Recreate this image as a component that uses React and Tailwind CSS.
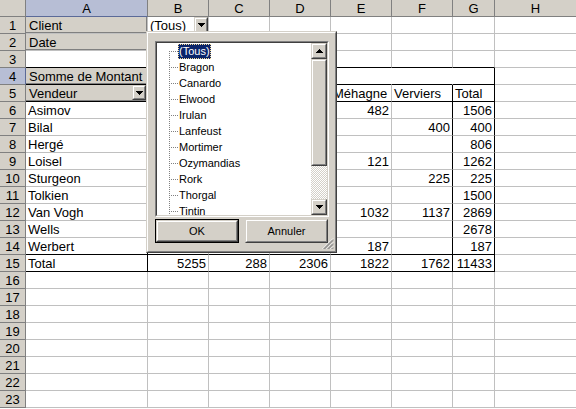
import React from 'react';

const W = ['w-[26px]', 'w-[122px]', 'w-[61px]', 'w-[61px]', 'w-[61px]', 'w-[61px]', 'w-[61px]', 'w-[42px]', 'w-[81px]'];
const LETTERS = ['A', 'B', 'C', 'D', 'E', 'F', 'G', 'H'];

const data = {
  1: { 0: { field: true, text: 'Client' }, 1: { text: '(Tous)', dd: true } },
  2: { 0: { field: true, text: 'Date' } },
  4: { 0: { field: true, text: 'Somme de Montant' } },
  5: { 0: { field: true, text: 'Vendeur', dd: true }, 4: { text: 'Méhagne' }, 5: { text: 'Verviers' }, 6: { text: 'Total' } },
  6: { 0: { text: 'Asimov' }, 4: { num: '482' }, 6: { num: '1506' } },
  7: { 0: { text: 'Bilal' }, 5: { num: '400' }, 6: { num: '400' } },
  8: { 0: { text: 'Hergé' }, 6: { num: '806' } },
  9: { 0: { text: 'Loisel' }, 4: { num: '121' }, 6: { num: '1262' } },
  10: { 0: { text: 'Sturgeon' }, 5: { num: '225' }, 6: { num: '225' } },
  11: { 0: { text: 'Tolkien' }, 6: { num: '1500' } },
  12: { 0: { text: 'Van Vogh' }, 4: { num: '1032' }, 5: { num: '1137' }, 6: { num: '2869' } },
  13: { 0: { text: 'Wells' }, 6: { num: '2678' } },
  14: { 0: { text: 'Werbert' }, 4: { num: '187' }, 6: { num: '187' } },
  15: { 0: { text: 'Total' }, 1: { num: '5255' }, 2: { num: '288' }, 3: { num: '2306' }, 4: { num: '1822' }, 5: { num: '1762' }, 6: { num: '11433' } },
};

const ITEMS = ['(Tous)', 'Bragon', 'Canardo', 'Elwood', 'Irulan', 'Lanfeust', 'Mortimer', 'Ozymandias', 'Rork', 'Thorgal', 'Tintin'];

function DownTri() {
  return (
    <svg width="7" height="4" viewBox="0 0 7 4" className="block">
      <rect x="0" y="0" width="7" height="1" fill="#000" />
      <rect x="1" y="1" width="5" height="1" fill="#000" />
      <rect x="2" y="2" width="3" height="1" fill="#000" />
      <rect x="3" y="3" width="1" height="1" fill="#000" />
    </svg>
  );
}

function UpTri() {
  return (
    <svg width="7" height="4" viewBox="0 0 7 4" className="block">
      <rect x="3" y="0" width="1" height="1" fill="#000" />
      <rect x="2" y="1" width="3" height="1" fill="#000" />
      <rect x="1" y="2" width="5" height="1" fill="#000" />
      <rect x="0" y="3" width="7" height="1" fill="#000" />
    </svg>
  );
}

function Raised({ className, children }) {
  return (
    <div className={`shrink-0 border border-t-[#d4d0c8] border-l-[#d4d0c8] border-r-[#404040] border-b-[#404040] ${className}`}>
      <div className="w-full h-full border border-t-white border-l-white border-r-[#808080] border-b-[#808080] bg-[#d4d0c8] flex items-center justify-center">
        {children}
      </div>
    </div>
  );
}

function Cell({ r, c }) {
  const d = (data[r] && data[r][c]) || {};
  const inPivot = c <= 6;
  const bb = inPivot && [3, 4, 5, 14, 15].includes(r);
  const rb = (c === 0 && r >= 4 && r <= 15) || (c === 5 && r >= 5 && r <= 15) || (c === 6 && r >= 4 && r <= 15);
  const rw = r === 4 && c >= 1 && c <= 5;
  const widthCls = c === 7 ? 'border-b' : 'border-r border-b';
  const rCls = rb ? 'border-r-black' : rw ? 'border-r-white' : 'border-r-[#c0c0c0]';
  const bCls = bb ? 'border-b-black' : 'border-b-[#c0c0c0]';
  return (
    <div className={`${W[c + 1]} shrink-0 h-[17px] ${widthCls} ${rCls} ${bCls}`}>
      {d.field ? (
        <div className="h-full flex bg-[#d4d0c8] border-r border-b border-r-[#808080] border-b-[#808080]">
          <div className="flex-1 pl-[3px] pt-[2px] text-[13px] leading-[14px] whitespace-nowrap">{d.text}</div>
          {d.dd && (
            <Raised className="w-[14px] h-full">
              <DownTri />
            </Raised>
          )}
        </div>
      ) : d.dd ? (
        <div className="h-full flex">
          <div className="flex-1 pl-[2px] pt-[2px] text-[13px] leading-[14px] whitespace-nowrap">{d.text}</div>
          <Raised className="w-[14px] h-full">
            <DownTri />
          </Raised>
        </div>
      ) : d.num ? (
        <div className="h-full pr-[2px] pt-[2px] text-right text-[13px] leading-[14px] whitespace-nowrap">{d.num}</div>
      ) : d.text ? (
        <div className="h-full pl-[2px] pt-[2px] text-[13px] leading-[14px] whitespace-nowrap">{d.text}</div>
      ) : null}
    </div>
  );
}

function HeaderRow() {
  return (
    <div className="flex h-[17px]">
      <div className="w-[26px] shrink-0 bg-[#d4d0c8] border-r border-b border-[#808080]" />
      {LETTERS.map((l, i) => (
        <div
          key={l}
          className={`${W[i + 1]} shrink-0 h-[17px] pt-[2px] text-center text-[13px] leading-[14px] ${i === 7 ? 'border-b' : 'border-r border-b'} ${
            i === 0 ? 'bg-[#b7bed5] border-r-[#808080] border-b-[#5b6a98]' : 'bg-[#d4d0c8] border-[#808080]'
          }`}
        >
          {l}
        </div>
      ))}
    </div>
  );
}

function Row({ r }) {
  return (
    <div className="flex h-[17px]">
      <div
        className={`w-[26px] shrink-0 h-[17px] pt-[2px] text-center text-[13px] leading-[14px] border-r border-b ${
          r === 4 ? 'bg-[#b7bed5] border-r-[#5b6a98] border-b-[#808080]' : 'bg-[#d4d0c8] border-[#808080]'
        }`}
      >
        {r}
      </div>
      {LETTERS.map((l, c) => (
        <Cell key={l} r={r} c={c} />
      ))}
    </div>
  );
}

function TreeSeg({ first }) {
  const vDots = [];
  for (let y = first ? 8 : 0; y < 16; y += 2) vDots.push(<rect key={'v' + y} x="12" y={y} width="1" height="1" fill="#808080" />);
  const hDots = [];
  for (let x = 14; x <= 20; x += 2) hDots.push(<rect key={'h' + x} x={x} y="8" width="1" height="1" fill="#808080" />);
  return (
    <svg width="21" height="16" viewBox="0 0 21 16" className="block shrink-0">
      {vDots}
      {hDots}
    </svg>
  );
}

function Popup() {
  return (
    <div className="absolute left-[146px] top-[31px] w-[191px] h-[222px] border border-t-[#d4d0c8] border-l-[#d4d0c8] border-r-[#404040] border-b-[#404040]">
      <div className="relative h-full border border-t-white border-l-white border-r-[#808080] border-b-[#808080] bg-[#d4d0c8] pl-[7px] pt-[8px]">
        <div className="w-[174px] h-[176px] border border-t-[#808080] border-l-[#808080] border-r-white border-b-white">
          <div className="w-full h-full flex border border-t-[#404040] border-l-[#404040] border-r-[#d4d0c8] border-b-[#d4d0c8] bg-white">
            <div className="flex-1 overflow-hidden text-[11px]">
              {ITEMS.map((it, i) => (
                <div key={it} className="flex h-[16px] items-center">
                  <TreeSeg first={i === 0} />
                  {i === 0 ? (
                    <span className="inline-block h-[15px] leading-[15px] px-[1px] bg-[#0a246a] text-white outline-1 outline-dotted outline-[#f5db95] -outline-offset-1">
                      {it}
                    </span>
                  ) : (
                    <span className="inline-block px-[1px] leading-[15px]">{it}</span>
                  )}
                </div>
              ))}
            </div>
            <div className="w-[16px] h-full flex flex-col">
              <Raised className="w-[16px] h-[16px]">
                <UpTri />
              </Raised>
              <Raised className="w-[16px] h-[107px]" />
              <div className="flex-1 bg-[repeating-conic-gradient(#ffffff_0_25%,#d4d0c8_0_50%)] bg-[length:2px_2px]" />
              <Raised className="w-[16px] h-[16px]">
                <DownTri />
              </Raised>
            </div>
          </div>
        </div>
        <div className="flex gap-[6px] mt-[2px] text-[11px]">
          <div className="w-[84px] h-[24px] border border-black">
            <Raised className="w-full h-full">OK</Raised>
          </div>
          <Raised className="w-[83px] h-[24px]">Annuler</Raised>
        </div>
        <svg width="12" height="12" viewBox="0 0 12 12" className="absolute right-[1px] bottom-[1px]">
          <path d="M11 0.5 L0.5 11" stroke="#ffffff" strokeWidth="1" />
          <path d="M11 1.5 L1.5 11 M11 2.5 L2.5 11" stroke="#808080" strokeWidth="1" />
          <path d="M11 4.5 L4.5 11" stroke="#ffffff" strokeWidth="1" />
          <path d="M11 5.5 L5.5 11 M11 6.5 L6.5 11" stroke="#808080" strokeWidth="1" />
          <path d="M11 8.5 L8.5 11" stroke="#ffffff" strokeWidth="1" />
          <path d="M11 9.5 L9.5 11 M11 10.5 L10.5 11" stroke="#808080" strokeWidth="1" />
        </svg>
      </div>
    </div>
  );
}

export default function App() {
  const rows = [];
  for (let r = 1; r <= 23; r++) rows.push(<Row key={r} r={r} />);
  return (
    <div className="relative w-[576px] h-[409px] overflow-hidden bg-white text-black font-['Liberation_Sans',Arial,sans-serif]">
      <HeaderRow />
      {rows}
      <Popup />
    </div>
  );
}
